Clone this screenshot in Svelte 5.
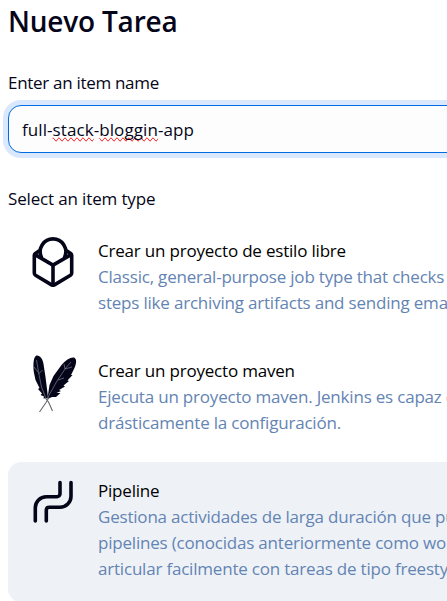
<script lang="ts">
	type ItemType = {
		id: string;
		title: string;
		lines: string[];
	};

	const items: ItemType[] = [
		{
			id: 'freestyle',
			title: 'Crear un proyecto de estilo libre',
			lines: [
				'Classic, general-purpose job type that checks out',
				'steps like archiving artifacts and sending email'
			]
		},
		{
			id: 'maven',
			title: 'Crear un proyecto maven',
			lines: ['Ejecuta un proyecto maven. Jenkins es capaz de', 'drásticamente la configuración.']
		},
		{
			id: 'pipeline',
			title: 'Pipeline',
			lines: [
				'Gestiona actividades de larga duración que pueden',
				'pipelines (conocidas anteriormente como workflows)',
				'articular facilmente con tareas de tipo freestyle'
			]
		}
	];

	let selected = $state('pipeline');
</script>

<main>
	<h1>Nuevo Tarea</h1>

	<p class="label">Enter an item name</p>
	<div class="input">
		<span>full-<span class="typo">stack</span>-<span class="typo">bloggin</span>-app</span>
	</div>

	<p class="label type-label">Select an item type</p>
	<ul>
		{#each items as item (item.id)}
			<li class:selected={selected === item.id}>
				<button onclick={() => (selected = item.id)}>
					<span class="icon">
						{#if item.id === 'freestyle'}
							<svg class="line" viewBox="0 -0.6 48 52">
								<path d="M12.300 20.300A12.800 12.800 0 1 1 35.700 20.300" />
								<path d="M10 14.500L6.300 16.900Q5.300 17.600 5.300 19V36.500Q5.300 38 6.500 38.700L22.600 48.300Q24 49 25.400 48.300L41.500 38.700Q42.700 38 42.700 36.500V19Q42.700 17.600 41.700 16.900L38 14.500" />
								<path d="M6 18L24 28.500L42 18M24 28.500V48" />
							</svg>
						{:else if item.id === 'maven'}
							<svg class="feathers" viewBox="0 0 48 60">
								<path fill="#05051a" d="M7.500 1.500C11 1 13.800 5 14.500 10L16.500 23L18 35L19 44L14.500 44.500L15 42.500L11.500 41L13 39.500L9 35L10.500 34L6.500 26L4.800 18C4 10 4.500 2.500 7.500 1.500Z" />
								<path fill="#05051a" d="M45 3.500C48.500 5 47 11 45 15L42 21L43.500 21L38.500 26.500L40 27L34.500 31.500L36 32.500L30 36L32 37L27.500 39H31.500L27 43H23L18.500 45L19 41L20.500 31L24.500 22L32.500 11C36.500 6 42 2.800 45 3.500Z" />
								<path fill="none" stroke="#9292a0" stroke-width="0.6" d="M7.500 6L9.500 18L12.500 33L17.500 46M9 18L5 13M9.500 20L13.500 16M42 8L36 15L28 27L18 45M36 15L35 10M36 15L43 13M29 26L35 24" />
								<path fill="none" stroke="#66666f" stroke-width="1.1" d="M16.500 44L19.500 48L23.500 57M20 43.500L17 48.500L10.500 58" />
							</svg>
						{:else}
							<svg class="line" viewBox="0 0 48 52">
								<path d="M6.300 45V31.700A11 11 0 0 1 17.300 20.700H28A3 3 0 0 0 31 17.700V6.500" />
								<path d="M17.300 45V34A3 3 0 0 1 20.300 31.200H31A11 11 0 0 0 42 20.200V6.500" />
							</svg>
						{/if}
					</span>
					<span class="text">
						<span class="title">{item.title}</span>
						{#each item.lines as line}
							<span class="desc">{line}</span>
						{/each}
					</span>
				</button>
			</li>
		{/each}
	</ul>
</main>

<style>
	:global(body) {
		background: #fff;
		overflow: hidden;
	}
	main {
		width: 447px;
		height: 601px;
		padding-left: 8px;
		box-sizing: border-box;
		overflow: hidden;
		font-family: 'Open Sans', 'Noto Sans', sans-serif;
		font-size: 17px;
		line-height: 26px;
		color: #05051a;
		white-space: nowrap;
	}
	h1 {
		margin: 0;
		padding-top: 1px;
		font-size: 28px;
		font-weight: 600;
		line-height: 40px;
		letter-spacing: -0.2px;
	}
	.label {
		margin: 29px 0 9px;
		letter-spacing: -0.3px;
	}
	.type-label {
		margin: 33px 0 10px;
		letter-spacing: -0.15px;
	}
	.input {
		width: 900px;
		height: 48px;
		padding: 2px 13px 0;
		box-sizing: border-box;
		display: flex;
		align-items: center;
		border: 1px solid #006be6;
		border-radius: 13px;
		background: #fdfdfd;
		box-shadow: 0 0 0 5px #d9e8fc;
		letter-spacing: 0.08px;
	}
	.typo {
		text-decoration-line: spelling-error;
	}
	ul {
		width: 900px;
		margin: 0;
		padding: 0;
		list-style: none;
		display: flex;
		flex-direction: column;
		gap: 6px;
	}
	li {
		border-radius: 13px;
	}
	li.selected {
		background: #eef2f7;
	}
	button {
		width: 100%;
		padding: 16px 21px 20px;
		border: 0;
		background: none;
		display: flex;
		gap: 21px;
		font: inherit;
		color: inherit;
		text-align: left;
	}
	.icon {
		width: 48px;
		height: 52px;
		flex: none;
	}
	svg {
		display: block;
		width: 48px;
		height: 52px;
		margin-top: -2px;
	}
	.line {
		fill: none;
		stroke: #05051a;
		stroke-width: 3.6;
		stroke-linecap: round;
		stroke-linejoin: round;
	}
	.feathers {
		height: 60px;
		margin-top: -4px;
	}
	.title,
	.desc {
		display: block;
		letter-spacing: -0.2px;
	}
	.title {
		color: #000;
	}
	.desc {
		color: #6484b3;
	}
</style>
